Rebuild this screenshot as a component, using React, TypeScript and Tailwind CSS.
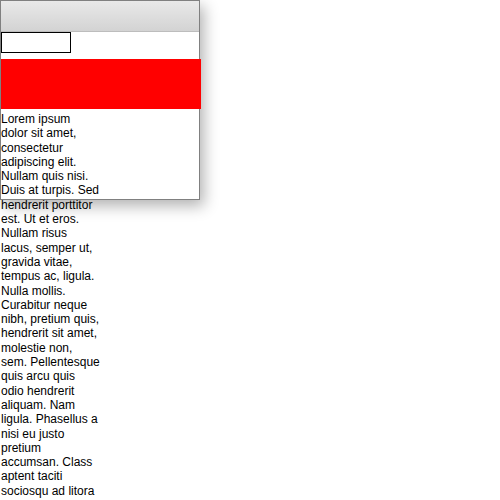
const LOREM =
  'Lorem ipsum dolor sit amet, consectetur adipiscing elit. Nullam quis nisi. Duis at turpis. Sed hendrerit porttitor est. Ut et eros. Nullam risus lacus, semper ut, gravida vitae, tempus ac, ligula. Nulla mollis. Curabitur neque nibh, pretium quis, hendrerit sit amet, molestie non, sem. Pellentesque quis arcu quis odio hendrerit aliquam. Nam ligula. Phasellus a nisi eu justo pretium accumsan. Class aptent taciti sociosqu ad litora torquent per conubia nostra, per inceptos himenaeos.';

const App: React.FC = () => {
  return (
    <div className="h-[500px] w-[500px] overflow-hidden bg-white font-['Liberation_Sans',Arial,sans-serif] text-black">
      <div className="h-[200px] w-[200px] border border-[#808080] bg-white shadow-[4px_6px_14px_rgba(0,0,0,0.3)]">
        <div className="h-[31px] border-b border-[#bdbdbd] bg-gradient-to-b from-[#e9e9e9] to-[#d3d3d3]" />
        <input type="text" className="block h-[21px] w-[70px] border border-black bg-white outline-none" />
        <div className="mt-[6px] h-[50px] w-[200px] bg-[#ff0000]" />
        <p className="mt-[3px] w-[99px] text-[12px] leading-[14.3px]">{LOREM}</p>
      </div>
    </div>
  );
};

export default App;
